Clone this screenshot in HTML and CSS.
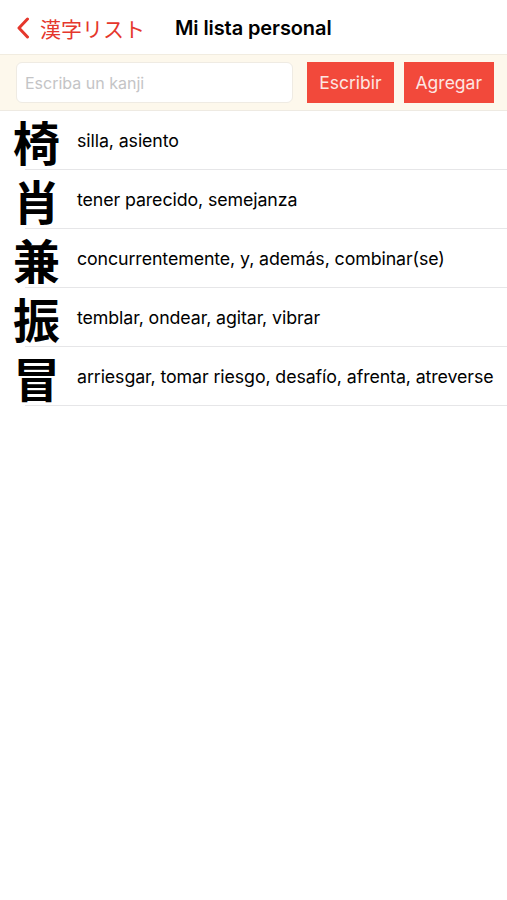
FILE: index.html
```html
<!DOCTYPE html>
<html lang="es">
  <head>
    <meta charset="UTF-8" />
    <meta name="viewport" content="width=device-width, initial-scale=1.0" />
    <title>Mi lista personal</title>
    <link rel="stylesheet" href="styles.css">
  </head>
  <body>
    <header class="nav-bar">
      <a class="nav-back" href="#">
        <svg class="ico-back" width="14" height="22" viewBox="0 0 14 22">
          <path d="M11.5 2 L3 11 L11.5 20" fill="none" stroke="#e5372c" stroke-width="3" stroke-linecap="round" stroke-linejoin="round" />
        </svg>
        <span>漢字リスト</span>
      </a>
      <h1 class="nav-title">Mi lista personal</h1>
    </header>

    <form class="search-bar">
      <input type="text" class="inp-kanji" placeholder="Escriba un kanji" />
      <button type="button" class="btn-red">Escribir</button>
      <button type="submit" class="btn-red">Agregar</button>
    </form>

    <ul class="list-kanji">
      <li><span class="kanji">椅</span><span class="meaning">silla, asiento</span></li>
      <li><span class="kanji">肖</span><span class="meaning">tener parecido, semejanza</span></li>
      <li><span class="kanji">兼</span><span class="meaning">concurrentemente, y, además, combinar(se)</span></li>
      <li><span class="kanji">振</span><span class="meaning">temblar, ondear, agitar, vibrar</span></li>
      <li><span class="kanji">冒</span><span class="meaning">arriesgar, tomar riesgo, desafío, afrenta, atreverse</span></li>
    </ul>
  </body>
</html>
```

FILE: styles.css
```css
* {
  box-sizing: border-box;
}

body {
  margin: 0;
  background-color: #fff;
  color: #000;
  font-family: "Inter", "Liberation Sans", "Noto Sans CJK JP", sans-serif;
}

/* 상단 네비게이션 */
.nav-bar {
  display: flex;
  align-items: center;
  height: 54px;
  padding-left: 16px;
  padding-top: 2px;
}

.nav-back {
  display: flex;
  align-items: center;
  gap: 10px;
  color: #e5372c;
  text-decoration: none;
  font-family: "Noto Sans CJK JP", sans-serif;
  font-size: 21px;
  font-weight: 400;
}

.nav-title {
  margin: 0 0 0 30px;
  font-size: 20px;
  font-weight: 600;
  letter-spacing: -0.1px;
}

/* 입력 영역 */
.search-bar {
  display: flex;
  align-items: center;
  gap: 10px;
  height: 57px;
  padding: 0 13px 0 16px;
  background-color: #fdf8ec;
  border-top: 1px solid #f1ece0;
  border-bottom: 1px solid #eeeae2;
}

.inp-kanji {
  width: 278px;
  height: 41px;
  margin-right: 4px;
  padding: 0 8px;
  border: 1px solid #efebe3;
  border-radius: 6px;
  background-color: #fff;
  font-family: inherit;
  font-size: 16px;
}

.inp-kanji::placeholder {
  color: #c4c4c6;
}

.btn-red {
  height: 41px;
  padding: 0 12px;
  border: none;
  background-color: #f2493b;
  color: #fde6e2;
  font-family: inherit;
  font-size: 17.5px;
}

/* 한자 목록 */
.list-kanji {
  margin: 0;
  padding: 0;
  list-style: none;
}

.list-kanji li {
  position: relative;
  display: flex;
  align-items: center;
  height: 59px;
}

.list-kanji li::after {
  content: "";
  position: absolute;
  left: 25px;
  right: 0;
  bottom: 0;
  height: 1px;
  background-color: #e6e6e8;
}

.kanji {
  flex: none;
  width: 77px;
  padding-left: 13px;
  font-family: "Noto Sans CJK JP", sans-serif;
  font-size: 47px;
  font-weight: 700;
  line-height: 1;
}

.meaning {
  font-size: 17.8px;
  letter-spacing: -0.1px;
}
```
